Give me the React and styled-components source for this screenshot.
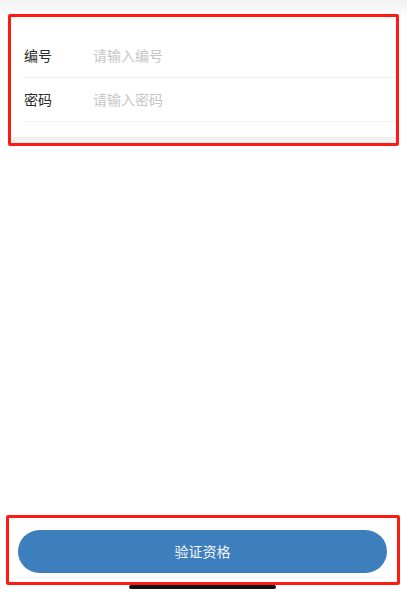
import React from "react";
import styled, { createGlobalStyle } from "styled-components";

const GlobalStyle = createGlobalStyle`
  html, body {
    margin: 0;
    padding: 0;
    background: #fff;
    font-family: "Noto Sans CJK SC", "Noto Sans", sans-serif;
  }
  * { box-sizing: border-box; }
`;

const Page = styled.div`
  width: 407px;
  height: 594px;
  display: flex;
  flex-direction: column;
  background: #fff;
`;

const TopArea = styled.div`
  padding: 14px 8px 0 8px;
  background: linear-gradient(#f2f2f2 0px, #fbfbfb 14px, #fff 15px);
`;

const Highlight = styled.div`
  border: 3px solid #ff1a12;
  border-radius: 2px;
  background: ${(p) => p.$fill || "#fff"};
`;

const Card = styled.div`
  background: #fff;
  padding-top: 17px;
  padding-bottom: 15px;
  margin-bottom: 6px;
  box-shadow: 0 1px 3px rgba(0, 0, 0, 0.05);
`;

const Row = styled.label`
  display: flex;
  align-items: center;
  height: 44px;
  padding-bottom: 2px;
  margin-left: 12px;
  border-bottom: 1px solid #f0f0f0;
`;

const Label = styled.span`
  width: 70px;
  padding-left: 1px;
  font-size: 14px;
  color: #2a2a2a;
`;

const Input = styled.input`
  flex: 1;
  border: none;
  outline: none;
  background: transparent;
  padding: 0;
  font-family: inherit;
  font-size: 14px;
  color: #333;
  &::placeholder {
    color: #c6c6c6;
  }
`;

const Spacer = styled.div`
  flex: 1;
`;

const BottomArea = styled.div`
  padding: 0 7px 0 6px;
`;

const ButtonWrap = styled.div`
  padding: 12px 10px 9px 9px;
`;

const Button = styled.button`
  display: block;
  width: 100%;
  height: 43px;
  padding: 0 0 2px;
  border: none;
  border-radius: 22px;
  background: #3d7ebd;
  color: #f4f7fb;
  font-family: inherit;
  font-size: 14px;
  cursor: pointer;
`;

const HomeBar = styled.div`
  width: 147px;
  height: 4px;
  margin: 0 auto 5px 129px;
  border-radius: 2px;
  background: #111;
`;

const fields = [
  { label: "编号", placeholder: "请输入编号", type: "text" },
  { label: "密码", placeholder: "请输入密码", type: "password" },
];

const App = () => {
  return (
    <Page>
      <GlobalStyle />
      <TopArea>
        <Highlight $fill="#f4f4f4">
          <Card>
            {fields.map((f) => (
              <Row key={f.label}>
                <Label>{f.label}</Label>
                <Input type={f.type} placeholder={f.placeholder} />
              </Row>
            ))}
          </Card>
        </Highlight>
      </TopArea>
      <Spacer />
      <BottomArea>
        <Highlight>
          <ButtonWrap>
            <Button>验证资格</Button>
          </ButtonWrap>
        </Highlight>
      </BottomArea>
      <HomeBar />
    </Page>
  );
};

export default App;
